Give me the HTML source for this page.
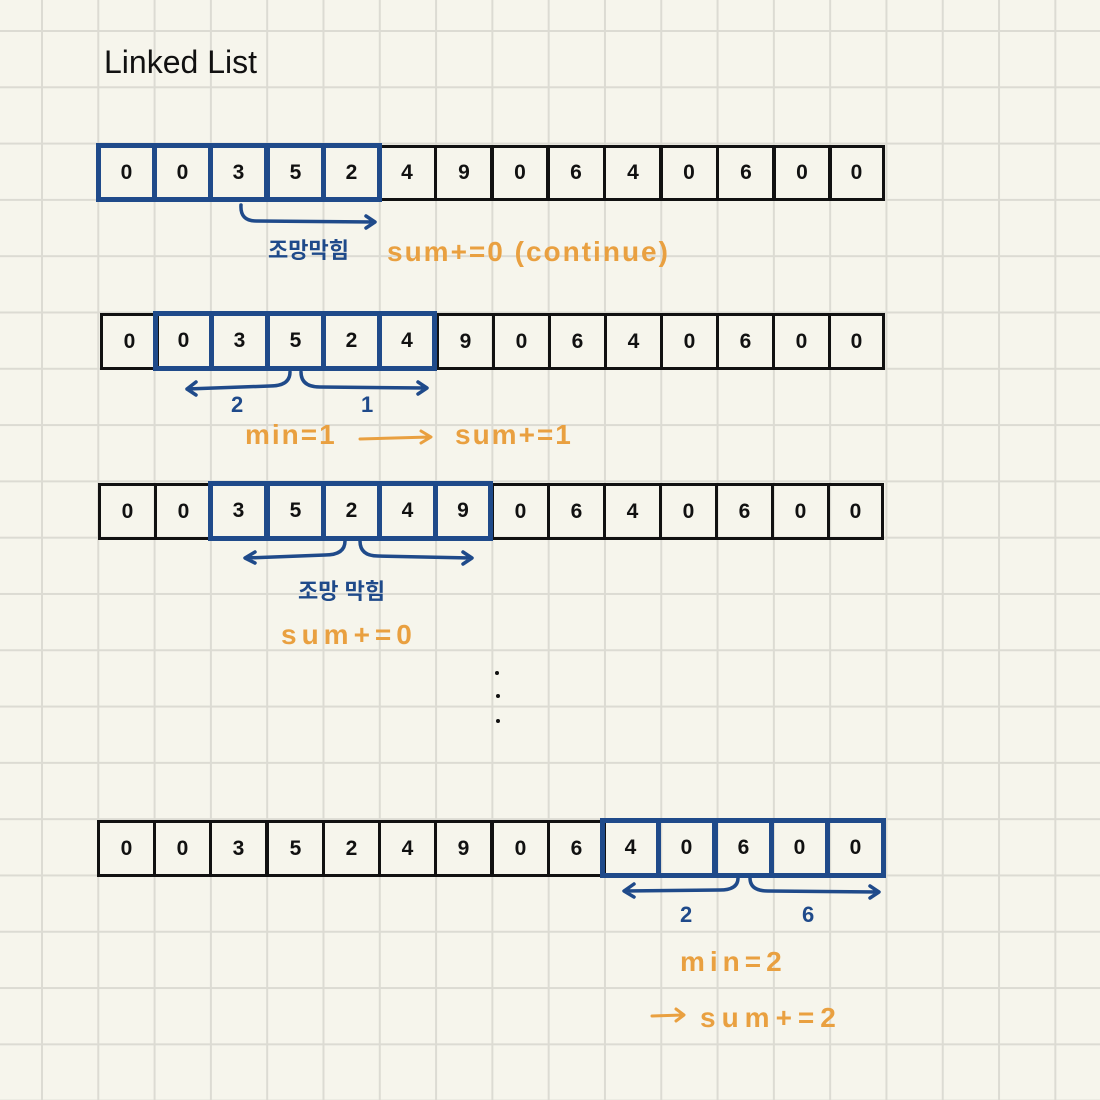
<!DOCTYPE html>
<html><head><meta charset="utf-8"><style>
body{margin:0}
#p{position:relative;width:1100px;height:1100px;overflow:hidden;background-color:#f6f5ec;
background-image:linear-gradient(to right,#dcdbd3 2px,transparent 2px),linear-gradient(to bottom,#dcdbd3 2px,transparent 2px);
background-size:56.3px 56.3px;background-position:41px 30px;font-family:"Liberation Sans","Noto Sans CJK KR",sans-serif}
.c{position:absolute;box-sizing:border-box;border:3px solid #111;display:flex;align-items:center;justify-content:center;font-size:21px;font-weight:bold;color:#111}
.b{border:5px solid #1f4a8a;z-index:2}
.t{position:absolute;white-space:nowrap}
.o{color:#e9a040;font-size:28px;font-weight:bold;letter-spacing:2px}
.bl{color:#1f4a8a;font-size:22px;font-weight:bold}
svg{position:absolute;left:0;top:0;z-index:3}
</style></head><body><div id="p">
<div class="t" style="left:104px;top:44px;font-size:32px;color:#111">Linked List</div>

<!-- R1 -->
<div class="c b" style="left:96px;top:143px;width:61px;height:59px">0</div>
<div class="c b" style="left:152px;top:143px;width:61px;height:59px">0</div>
<div class="c b" style="left:208px;top:143px;width:61px;height:59px">3</div>
<div class="c b" style="left:265px;top:143px;width:61px;height:59px">5</div>
<div class="c b" style="left:321px;top:143px;width:61px;height:59px">2</div>
<div class="c" style="left:377px;top:145px;width:60px;height:56px">4</div>
<div class="c" style="left:434px;top:145px;width:60px;height:56px">9</div>
<div class="c" style="left:490px;top:145px;width:60px;height:56px">0</div>
<div class="c" style="left:546px;top:145px;width:60px;height:56px">6</div>
<div class="c" style="left:603px;top:145px;width:60px;height:56px">4</div>
<div class="c" style="left:659px;top:145px;width:60px;height:56px">0</div>
<div class="c" style="left:716px;top:145px;width:60px;height:56px">6</div>
<div class="c" style="left:772px;top:145px;width:60px;height:56px">0</div>
<div class="c" style="left:828px;top:145px;width:57px;height:56px">0</div>

<!-- R2 -->
<div class="c" style="left:100px;top:313px;width:59px;height:57px">0</div>
<div class="c b" style="left:153px;top:311px;width:61px;height:60px">0</div>
<div class="c b" style="left:209px;top:311px;width:61px;height:60px">3</div>
<div class="c b" style="left:265px;top:311px;width:61px;height:60px">5</div>
<div class="c b" style="left:321px;top:311px;width:61px;height:60px">2</div>
<div class="c b" style="left:377px;top:311px;width:60px;height:60px">4</div>
<div class="c" style="left:436px;top:313px;width:59px;height:57px">9</div>
<div class="c" style="left:492px;top:313px;width:59px;height:57px">0</div>
<div class="c" style="left:548px;top:313px;width:59px;height:57px">6</div>
<div class="c" style="left:604px;top:313px;width:59px;height:57px">4</div>
<div class="c" style="left:660px;top:313px;width:59px;height:57px">0</div>
<div class="c" style="left:716px;top:313px;width:59px;height:57px">6</div>
<div class="c" style="left:772px;top:313px;width:59px;height:57px">0</div>
<div class="c" style="left:828px;top:313px;width:57px;height:57px">0</div>

<!-- R3 -->
<div class="c" style="left:98px;top:483px;width:59px;height:57px">0</div>
<div class="c" style="left:154px;top:483px;width:59px;height:57px">0</div>
<div class="c b" style="left:208px;top:481px;width:61px;height:60px">3</div>
<div class="c b" style="left:265px;top:481px;width:61px;height:60px">5</div>
<div class="c b" style="left:321px;top:481px;width:61px;height:60px">2</div>
<div class="c b" style="left:377px;top:481px;width:61px;height:60px">4</div>
<div class="c b" style="left:433px;top:481px;width:60px;height:60px">9</div>
<div class="c" style="left:491px;top:483px;width:59px;height:57px">0</div>
<div class="c" style="left:547px;top:483px;width:59px;height:57px">6</div>
<div class="c" style="left:603px;top:483px;width:59px;height:57px">4</div>
<div class="c" style="left:659px;top:483px;width:59px;height:57px">0</div>
<div class="c" style="left:715px;top:483px;width:59px;height:57px">6</div>
<div class="c" style="left:771px;top:483px;width:59px;height:57px">0</div>
<div class="c" style="left:827px;top:483px;width:57px;height:57px">0</div>

<!-- R4 -->
<div class="c" style="left:97px;top:820px;width:59px;height:57px">0</div>
<div class="c" style="left:153px;top:820px;width:59px;height:57px">0</div>
<div class="c" style="left:209px;top:820px;width:59px;height:57px">3</div>
<div class="c" style="left:266px;top:820px;width:59px;height:57px">5</div>
<div class="c" style="left:322px;top:820px;width:59px;height:57px">2</div>
<div class="c" style="left:378px;top:820px;width:59px;height:57px">4</div>
<div class="c" style="left:434px;top:820px;width:59px;height:57px">9</div>
<div class="c" style="left:491px;top:820px;width:59px;height:57px">0</div>
<div class="c" style="left:547px;top:820px;width:59px;height:57px">6</div>
<div class="c b" style="left:600px;top:818px;width:61px;height:60px">4</div>
<div class="c b" style="left:656px;top:818px;width:61px;height:60px">0</div>
<div class="c b" style="left:713px;top:818px;width:61px;height:60px">6</div>
<div class="c b" style="left:769px;top:818px;width:61px;height:60px">0</div>
<div class="c b" style="left:825px;top:818px;width:61px;height:60px">0</div>

<svg width="1100" height="1100" fill="none" stroke-linecap="round" stroke-linejoin="round">
<g stroke="#1f4a8a" stroke-width="3.5">
<path d="M241 205 Q240 221 256 221 L374 222 M366 216 L375 222 L366 228"/>
<path d="M290 372 Q290 386 270 386 L187 389 M196 382 L187 389 L196 395"/>
<path d="M301 372 Q301 387 320 387 L426 388 M418 382 L427 388 L418 394"/>
<path d="M345 541 Q345 555 325 555 L246 558 M255 552 L245 558 L255 563"/>
<path d="M360 541 Q360 556 378 556 L471 558 M463 552 L472 558 L463 564"/>
<path d="M738 878 Q738 890 720 890 L625 891 M634 884 L624 891 L634 897"/>
<path d="M750 878 Q750 891 768 891 L878 892 M870 886 L879 892 L870 898"/>
</g>
<g stroke="#e9a040" stroke-width="3">
<path d="M360 439 L430 437 M421 431 L431 437 L421 443"/>
<path d="M652 1016 L683 1015 M676 1009 L684 1015 L676 1021"/>
</g>
<g fill="#111"><circle cx="497" cy="673" r="2"/><circle cx="498" cy="696" r="2"/><circle cx="498" cy="721" r="2"/></g>
</svg>

<div class="t bl" style="left:268px;top:233px">조망막힘</div>
<div class="t o" style="left:387px;top:236px">sum+=0 (continue)</div>
<div class="t bl" style="left:231px;top:392px">2</div>
<div class="t bl" style="left:361px;top:392px">1</div>
<div class="t o" style="left:245px;top:419px">min=1</div>
<div class="t o" style="left:455px;top:419px">sum+=1</div>
<div class="t bl" style="left:298px;top:574px">조망 막힘</div>
<div class="t o" style="left:281px;top:619px;letter-spacing:5px">sum+=0</div>
<div class="t bl" style="left:680px;top:902px">2</div>
<div class="t bl" style="left:802px;top:902px">6</div>
<div class="t o" style="left:680px;top:946px;letter-spacing:5px">min=2</div>
<div class="t o" style="left:700px;top:1002px;letter-spacing:6px">sum+=2</div>
</div></body></html>
